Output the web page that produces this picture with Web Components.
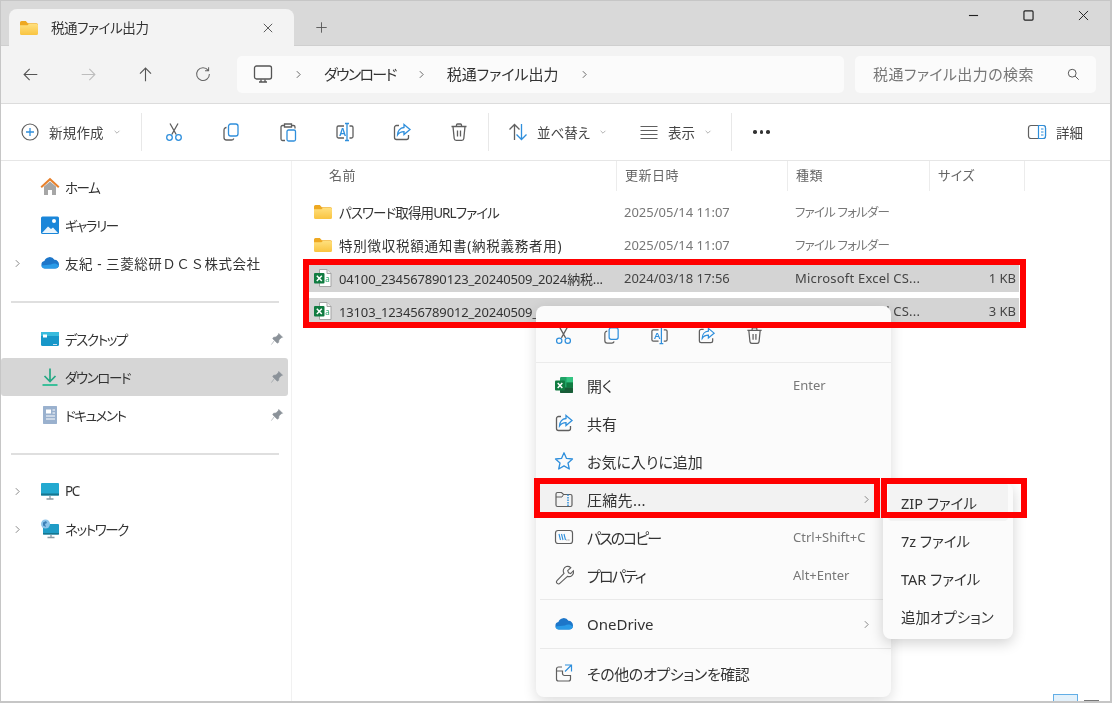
<!DOCTYPE html>
<html lang="ja">
<head>
<meta charset="utf-8">
<title>税通ファイル出力</title>
<style>
  html, body { margin: 0; background: #fff; }
</style>
</head>
<body>
<explorer-window>
  <title-bar></title-bar>
  <address-bar></address-bar>
  <command-bar></command-bar>
  <nav-pane slot="nav">
    <nav-row icon="home">ホーム</nav-row>
    <nav-row icon="gallery">ギャラリー</nav-row>
    <nav-row icon="cloud" arrow style="--nav-ls:.55px;--nav-ff:normal">友紀 - 三菱総研ＤＣＳ株式会社</nav-row>
    <nav-line></nav-line>
    <nav-row icon="desktop" pin>デスクトップ</nav-row>
    <nav-row icon="download" pin selected>ダウンロード</nav-row>
    <nav-row icon="document" pin>ドキュメント</nav-row>
    <nav-line></nav-line>
    <nav-row icon="pc" arrow>PC</nav-row>
    <nav-row icon="network" arrow>ネットワーク</nav-row>
  </nav-pane>
  <file-view slot="files">
    <file-row icon="folder" date="2025/05/14 11:07" type="ファイル フォルダー" style="--name-ls:-.9px">パスワード取得用URLファイル</file-row>
    <file-row icon="folder" date="2025/05/14 11:07" type="ファイル フォルダー" style="--name-ls:.75px">特別徴収税額通知書(納税義務者用)</file-row>
    <file-row icon="csv" selected date="2024/03/18 17:56" type="Microsoft Excel CS..." size="1 KB" style="--name-ls:-.15px">04100_234567890123_20240509_2024納税...</file-row>
    <file-row icon="csv" selected date="2024/03/18 17:56" type="Microsoft Excel CS..." size="3 KB" style="--name-ls:-.15px">13103_123456789012_20240509_2024納税...</file-row>
  </file-view>
  <context-menu slot="over">
    <menu-item icon="excel" key="Enter">開く</menu-item>
    <menu-item icon="share">共有</menu-item>
    <menu-item icon="star">お気に入りに追加</menu-item>
    <menu-item icon="zipfolder" more active style="--item-ls:.3px">圧縮先...</menu-item>
    <menu-item icon="path" key="Ctrl+Shift+C" style="--item-ls:-2px">パスのコピー</menu-item>
    <menu-item icon="wrench" key="Alt+Enter" style="--item-ls:-1.800px">プロパティ</menu-item>
    <menu-line></menu-line>
    <menu-item icon="cloud" more>OneDrive</menu-item>
    <menu-line></menu-line>
    <menu-item icon="moreopts" style="--item-ls:-.4px">その他のオプションを確認</menu-item>
  </context-menu>
  <sub-menu slot="over">
    <sub-item active>ZIP ファイル</sub-item>
    <sub-item>7z ファイル</sub-item>
    <sub-item>TAR ファイル</sub-item>
    <sub-item>追加オプション</sub-item>
  </sub-menu>
  <red-box slot="over" x="303" y="259" w="723" h="69"></red-box>
  <red-box slot="over" x="534" y="478" w="346" h="40"></red-box>
  <red-box slot="over" x="881" y="478" w="146" h="40"></red-box>
  <view-toggle slot="over"></view-toggle>
</explorer-window>

<script>
const GR = '#5f5f5f', BL = '#2f8fdc';
const ICONS = {
  folder: `<defs><linearGradient id="f" x1="0" y1="0" x2="0" y2="1"><stop offset="0" stop-color="#ffe07e"/><stop offset="1" stop-color="#f9c440"/></linearGradient></defs>
    <path d="M1 4.500A1.500 1.500 0 0 1 2.500 3h4.300l2 2.200H17.500A1.500 1.500 0 0 1 19 6.700V9H1z" fill="#eea821"/>
    <path d="M1 7.200h7.500l1.500-1.400h7.600A1.500 1.500 0 0 1 19 7.300v8.200a1.500 1.500 0 0 1-1.500 1.500h-15A1.500 1.500 0 0 1 1 15.500z" fill="url(#f)"/>`,
  csv: `<path d="M6.500 1.500h7.500l4 4v13H6.500z" fill="#fff" stroke="#a4a4a4"/><path d="M14 1.500v4h4" fill="#eee" stroke="#a4a4a4"/>
    <rect x="1" y="5" width="10.500" height="10.500" rx="1" fill="#107c41"/><path d="M3.800 7.700l5 5.200m0-5.200l-5 5.200" stroke="#fff" stroke-width="1.500"/>
    <text x="12.200" y="13.800" font-size="8" font-family="Noto Sans" fill="#21a366">a</text>`,
  excel: `<rect x="6" y="2" width="13" height="16" rx="1.200" fill="#21a366"/><rect x="12.500" y="2" width="6.500" height="5.500" fill="#33c481"/><rect x="12.500" y="7.500" width="6.500" height="5" fill="#107c41"/><rect x="6" y="12.500" width="13" height="5.500" rx="1" fill="#185c37"/>
    <rect x="1" y="5.500" width="10" height="10" rx="1" fill="#107c41"/><path d="M3.700 8l4.600 5m0-5l-4.600 5" stroke="#fff" stroke-width="1.500"/>`,
  cut: `<g fill="none" stroke-width="1.300"><path d="M6 1.500l6.200 11M14 1.500l-6.200 11" stroke="${GR}"/><circle cx="5.500" cy="15.500" r="2.800" stroke="${BL}"/><circle cx="14.500" cy="15.500" r="2.800" stroke="${BL}"/></g>`,
  copy: `<g fill="none" stroke-width="1.300"><rect x="7.500" y="2" width="9.500" height="12" rx="2.200" stroke="${BL}"/><path d="M5.500 5.500A2.500 2.500 0 0 0 3 8v7.500A2.500 2.500 0 0 0 5.500 18h5a2.500 2.500 0 0 0 2.300-1.600" stroke="${GR}"/></g>`,
  paste: `<g fill="none" stroke-width="1.300"><path d="M6 3.500H4.500A1.500 1.500 0 0 0 3 5v12a1.500 1.500 0 0 0 1.500 1.500H7M14 3.500h1.500A1.500 1.500 0 0 1 17 5v1.500M6.500 2h7v3h-7z" stroke="${GR}"/><rect x="9" y="8" width="8.500" height="11" rx="1.500" stroke="${BL}"/></g>`,
  rename: `<g fill="none" stroke-width="1.300"><path d="M9 4H3.500A1.500 1.500 0 0 0 2 5.500v9A1.500 1.500 0 0 0 3.500 16H9M14.500 4h2A1.500 1.500 0 0 1 18 5.500v9a1.500 1.500 0 0 1-1.500 1.500h-2" stroke="${GR}"/><path d="M12 1.500v17M10 1.500h4M10 18.500h4" stroke="${BL}"/></g><text x="4.200" y="13.600" font-size="10" font-weight="600" font-family="Noto Sans" fill="${BL}">A</text>`,
  share: `<g fill="none" stroke-width="1.300"><path d="M7 3.500H4.500A2 2 0 0 0 2.500 5.500v10a2 2 0 0 0 2 2h10a2 2 0 0 0 2-2V13" stroke="${GR}"/><path d="M12 2.500l6 5-6 5V9.700c-3 0-5 1-6.500 3.300 0-4 2.500-7.300 6.500-7.500z" stroke="${BL}"/></g>`,
  trash: `<g fill="none" stroke="${GR}" stroke-width="1.300"><path d="M2.500 4.500h15M7.500 4.500V3a1 1 0 0 1 1-1h3a1 1 0 0 1 1 1v1.500M4 4.500l1.200 12a2 2 0 0 0 2 1.800h5.600a2 2 0 0 0 2-1.800l1.200-12M8.500 8.500v6M11.500 8.500v6"/></g>`,
  sort: `<g fill="none" stroke-width="1.300"><path d="M6.500 18V2.500M1.500 7.500l5-5 5 5" stroke="${GR}"/><path d="M13.500 2v15.500M8.500 12.500l5 5 5-5" stroke="${BL}"/></g>`,
  view: `<path d="M1.500 4.500h17M1.500 8.500h17M1.500 12.500h17M1.500 16.500h17" stroke="${GR}" stroke-width="1"/>`,
  plus: `<circle cx="10" cy="10" r="8" fill="none" stroke="${GR}" stroke-width="1.200"/><path d="M10 6v8M6 10h8" stroke="${BL}" stroke-width="1.300"/>`,
  details: `<rect x="1.500" y="3.500" width="17" height="13" rx="2.500" fill="none" stroke="${GR}" stroke-width="1.200"/><path d="M11.500 3.500h4.500a2.500 2.500 0 0 1 2.500 2.500v8a2.500 2.500 0 0 1-2.500 2.500h-4.500z" fill="#fff" stroke="${BL}" stroke-width="1.200"/><path d="M14 7h2.500M14 10h2.500M14 13h2.500" stroke="${BL}"/>`,
  monitor: `<g fill="none" stroke="#555" stroke-width="1.300"><rect x="1.500" y="2" width="17" height="13" rx="2"/><path d="M6 18h8M8 15.500V18M12 15.500V18"/></g>`,
  home: `<path d="M4 9.500L10 4.500l6 5v8.500h-4v-5H8v5H4z" fill="#a6a6a6"/><path d="M1.200 10.300L10 2.200l8.800 8.100" fill="none" stroke="#e8812c" stroke-width="2"/>`,
  gallery: `<rect x="1" y="1.500" width="18" height="17.500" rx="1.500" fill="#1a86d9"/><path d="M2 18l6-6.500 3 2.500 2-1.500 5 5.500z" fill="#e9f4fc"/><circle cx="14" cy="6" r="2" fill="#fff"/>`,
  cloud: `<path d="M5 15.500a3.800 3.800 0 0 1-.6-7.500 5.500 5.500 0 0 1 10-1.200A4.500 4.500 0 0 1 19 11.500a4 4 0 0 1-4 4z" fill="#1d76c9"/><path d="M1.300 12.500c.4 1.800 1.800 3 3.700 3h10c2 0 3.500-1.300 3.900-3-3-2.800-5.500-2.500-8-1z" fill="#2a9be8"/>`,
  desktop: `<rect x="1" y="3" width="18" height="14" rx="1.500" fill="#1797c9"/><rect x="1" y="3" width="18" height="4" fill="#38bbdd"/><rect x="3" y="5.500" width="4" height="3" fill="#fff"/><path d="M13 15.500h4" stroke="#cde" stroke-width="1"/>`,
  download: `<path d="M10 1.500v12.500M4.500 9l5.500 5.500L15.500 9" fill="none" stroke="#25a884" stroke-width="1.700"/><path d="M2.500 18h15" stroke="#2bbd93" stroke-width="1.800"/>`,
  document: `<rect x="3" y="1" width="14" height="18" rx="1" fill="#86a0c4"/><rect x="3" y="1" width="14" height="18" rx="1" fill="#a9bcd6" opacity=".6"/><path d="M6 4.500h5v4H6z" fill="#fff"/><path d="M12.500 5h2.500M12.500 8h2.500M6 11h9M6 14h9" stroke="#fff"/>`,
  pc: `<rect x="1" y="2" width="18" height="12.500" rx="1" fill="#23a9d0"/><rect x="1" y="12.500" width="18" height="2" fill="#17768f"/><path d="M10 14.500v3M6.500 18h7" stroke="#8a9aa3" stroke-width="1.300"/>`,
  network: `<rect x="3" y="5" width="16" height="10.500" rx="1" fill="#1f9cc6"/><rect x="3" y="14" width="16" height="1.500" fill="#17768f"/><path d="M11 15.500v2.500M7.500 18.500h7" stroke="#8a9aa3" stroke-width="1.300"/><circle cx="5.500" cy="5" r="4.500" fill="#8cc4ea"/><path d="M3 3.500l3-1.500 1 2-2 1 1 3-3-1.500z" fill="#3d7fb5"/>`,
  pin: `<path d="M12.500 2l5.500 5.500-2 .7-3.200 3.200-.4 3.400-2 1.200-6.500-6.500 1.200-2 3.400-.4 3.200-3.200zM6 12.500L2 18" fill="#8b9299" stroke="#8b9299" stroke-width=".8"/>`,
  star: `<path d="M10 1.800l2.500 5.600 6 .6-4.500 4 1.300 6-5.300-3.100L4.700 18l1.300-6-4.500-4 6-.6z" fill="none" stroke="${BL}" stroke-width="1.300" stroke-linejoin="round"/>`,
  zipfolder: `<path d="M2 5a1.500 1.500 0 0 1 1.500-1.500h4l2 2h7A1.500 1.500 0 0 1 18 7v9a1.500 1.500 0 0 1-1.500 1.500h-13A1.500 1.500 0 0 1 2 16z" fill="none" stroke="${GR}" stroke-width="1.200"/><path d="M2 8h6l1.500-2.500" fill="none" stroke="${GR}"/><path d="M14 5.500v12" stroke="${BL}" stroke-width="1.500" stroke-dasharray="1.500 1"/>`,
  path: `<rect x="1.500" y="3.500" width="17" height="13" rx="2.500" fill="none" stroke="${GR}" stroke-width="1.200"/><path d="M5 7l1.500 6M7.500 7l1.500 6M10 7l1.500 6" fill="none" stroke="${BL}" stroke-width="1.100"/><path d="M12.500 13h.8M14.500 13h.8" stroke="${GR}"/>`,
  wrench: `<path d="M12.800 2.200a5 5 0 0 1 4.800 1.200l-3.300 3.200.9 2.300 2.300.8 2.900-3a5 5 0 0 1-6.300 6.100l-8 7.300a1.900 1.900 0 0 1-3.300-2.800l7.500-7.800a5 5 0 0 1 2.500-7.300z" transform="translate(.4 -.5) scale(.93)" fill="none" stroke="${GR}" stroke-width="1.200"/>`,
  moreopts: `<path d="M8 4H4.500A2 2 0 0 0 2.500 6v10A2 2 0 0 0 4.500 18h10a2 2 0 0 0 2-2v-3.500H10.500a2 2 0 0 1-2-2V8H2.500" fill="none" stroke="${GR}" stroke-width="1.200"/><path d="M11 2h6.500v6.500M17.500 2l-6.500 6.500" fill="none" stroke="${BL}" stroke-width="1.200"/>`
};

class XIcon extends HTMLElement {
  connectedCallback() {
    const size = this.getAttribute('size') || 20;
    this.attachShadow({ mode: 'open' }).innerHTML = `
      <style>:host { display: inline-flex; flex: none; width: ${size}px; height: ${size}px; } svg { display: block; }</style>
      <svg width="${size}" height="${size}" viewBox="0 0 20 20">${ICONS[this.getAttribute('name')] || ''}</svg>`;
  }
}
customElements.define('x-icon', XIcon);

// chevrons and small line glyphs share one element
const GLYPHS = {
  right: 'M7 4l6 6-6 6', down: 'M4 7l6 6 6-6', close: 'M3 3l14 14M17 3L3 17', add: 'M10 2v16M2 10h16',
  min: 'M3 10h14', back: 'M18 10H2.500M9 3.500L2.500 10 9 16.500', fwd: 'M2 10h15.500M11 3.500l6.500 6.500-6.500 6.500',
  up: 'M10 18V2.500M3.500 9L10 2.500 16.500 9', refresh: 'M16.500 5.500A8 8 0 1 0 18 10M17 1.500v4.500h-4.500',
  search: 'M12.500 12.500L18 18M14 8A6 6 0 1 1 2 8a6 6 0 0 1 12 0z', max: 'M4.500 3h11A1.500 1.500 0 0 1 17 4.500v11a1.500 1.500 0 0 1-1.500 1.500h-11A1.500 1.500 0 0 1 3 15.500v-11A1.500 1.500 0 0 1 4.500 3z'
};
class XGlyph extends HTMLElement {
  connectedCallback() {
    const s = this.getAttribute('size') || 12;
    const c = this.getAttribute('color') || '#555';
    const w = this.getAttribute('weight') || 1.6;
    this.attachShadow({ mode: 'open' }).innerHTML = `
      <style>:host { display: inline-flex; flex: none; } svg { display: block; }</style>
      <svg width="${s}" height="${s}" viewBox="0 0 20 20"><path d="${GLYPHS[this.getAttribute('name')]}" fill="none" stroke="${c}" stroke-width="${w}"/></svg>`;
  }
}
customElements.define('x-glyph', XGlyph);

class ExplorerWindow extends HTMLElement {
  constructor() {
    super();
    this.attachShadow({ mode: 'open' }).innerHTML = `
      <style>
        :host {
          display: flex; flex-direction: column; position: relative; overflow: hidden;
          box-sizing: border-box; width: 1112px; height: 703px;
          border: solid #c6c6c6; border-width: 1px 2px 2px 1px;
          background: #fff; color: #333;
          font: 14px "Noto Sans", "Noto Sans CJK JP", sans-serif;
          font-feature-settings: "palt";
          filter: blur(.3px);
        }
        #body { display: flex; flex: 1; min-height: 0; }
      </style>
      <slot></slot>
      <div id="body"><slot name="nav"></slot><slot name="files"></slot></div>
      <slot name="over"></slot>`;
  }
}
customElements.define('explorer-window', ExplorerWindow);

class TitleBar extends HTMLElement {
  constructor() {
    super();
    this.attachShadow({ mode: 'open' }).innerHTML = `
      <style>
        :host { display: flex; height: 45px; background: #d9d9d9; padding-left: 8px; box-sizing: border-box; border-bottom: 1px solid #cfcfcf; }
        #tab { display: flex; align-items: center; width: 285px; margin-top: 8px; margin-bottom: -1px; box-sizing: border-box; padding: 0 20px 0 10px; background: #f3f3f3; border-radius: 8px 8px 0 0; }
        #tab span { margin-left: 12px; flex: 1; font-size: 13.500px; letter-spacing: -.4px; padding-bottom: 2px; }
        #add { margin: 8px 0 0 21px; display: flex; align-items: center; }
        #ctl { margin-left: auto; display: flex; align-items: flex-start; padding: 8px 20px 0 0; gap: 42px; }
      </style>
      <div id="tab"><x-icon name="folder"></x-icon><span>税通ファイル出力</span><x-glyph name="close" size="12"></x-glyph></div>
      <div id="add"><x-glyph name="add" size="13" weight="1.400"></x-glyph></div>
      <div id="ctl"><x-glyph name="min" size="13" color="#222" weight="1.700"></x-glyph><x-glyph name="max" size="13" color="#222" weight="1.800"></x-glyph><x-glyph name="close" size="13" color="#222" weight="1.500"></x-glyph></div>`;
  }
}
customElements.define('title-bar', TitleBar);

class AddressBar extends HTMLElement {
  constructor() {
    super();
    this.attachShadow({ mode: 'open' }).innerHTML = `
      <style>
        :host { display: flex; align-items: center; height: 58px; box-sizing: border-box; background: #f3f3f3; border-bottom: 1.500px solid #dcdcdc; padding: 0 14px 1px 1px; }
        .nav { width: 57.500px; display: flex; justify-content: center; flex: none; }
        #crumbs { display: flex; align-items: center; gap: 20px; width: 607px; height: 37px; margin-left: 5px; box-sizing: border-box; padding-left: 16px; background: #fbfbfb; border-radius: 5px; font-size: 15px; }
        #crumbs span { padding-bottom: 2px; }
        #search { display: flex; align-items: center; justify-content: space-between; width: 241px; height: 37px; margin-left: 11px; box-sizing: border-box; padding: 0 16px 0 18px; background: #fbfbfb; border-radius: 5px; color: #777; font-size: 15px; letter-spacing: .4px; }
        #search span { padding-bottom: 2px; }
      </style>
      <div class="nav"><x-glyph name="back" size="17" weight="1.300"></x-glyph></div>
      <div class="nav"><x-glyph name="fwd" size="17" color="#bdbdbd" weight="1.300"></x-glyph></div>
      <div class="nav"><x-glyph name="up" size="17" weight="1.300"></x-glyph></div>
      <div class="nav"><x-glyph name="refresh" size="16" color="#666" weight="1.300"></x-glyph></div>
      <div id="crumbs">
        <x-icon name="monitor"></x-icon><x-glyph name="right" size="11"></x-glyph>
        <span style="letter-spacing:-1.700px">ダウンロード</span><x-glyph name="right" size="11"></x-glyph>
        <span>税通ファイル出力</span><x-glyph name="right" size="11"></x-glyph>
      </div>
      <div id="search"><span>税通ファイル出力の検索</span><x-glyph name="search" size="13" weight="1.500"></x-glyph></div>`;
  }
}
customElements.define('address-bar', AddressBar);

class CommandBar extends HTMLElement {
  constructor() {
    super();
    const btn = n => `<div class="ib"><x-icon name="${n}"></x-icon></div>`;
    this.attachShadow({ mode: 'open' }).innerHTML = `
      <style>
        :host { display: flex; align-items: center; height: 57px; flex: none; box-sizing: border-box; background: #fff; border-bottom: 1.500px solid #e6e6e6; padding-left: 19px; font-size: 13.500px; color: #444; }
        .sep { width: 1px; height: 38px; background: #e8e8e8; flex: none; }
        .ib { width: 57px; display: flex; justify-content: center; flex: none; }
        .tx { display: flex; align-items: center; gap: 9px; flex: none; }
        #new { width: 121px; }
        #more { margin-left: 21px; display: flex; gap: 3px; }
        #more i { width: 3.500px; height: 3.500px; border-radius: 50%; background: #333; }
        #det { margin-left: auto; padding-right: 27px; }
      </style>
      <div class="tx" id="new"><x-icon name="plus"></x-icon><span style="letter-spacing:.2px">新規作成</span><x-glyph style="margin-left:0" name="down" size="8" color="#888"></x-glyph></div>
      <div class="sep"></div>
      <div style="display:flex;margin:0 1px 0 3px">${['cut','copy','paste','rename','share','trash'].map(btn).join('')}</div>
      <div class="sep"></div>
      <div class="tx" style="margin-left:19px"><x-icon name="sort"></x-icon><span>並べ替え</span><x-glyph name="down" size="8" color="#888"></x-glyph></div>
      <div class="tx" style="margin-left:32px"><x-icon name="view"></x-icon><span>表示</span><x-glyph name="down" size="8" color="#888"></x-glyph></div>
      <div class="sep" style="margin-left:19px"></div>
      <div id="more"><i></i><i></i><i></i></div>
      <div class="tx" id="det"><x-icon name="details"></x-icon><span>詳細</span></div>`;
  }
}
customElements.define('command-bar', CommandBar);

class NavPane extends HTMLElement {
  constructor() {
    super();
    this.attachShadow({ mode: 'open' }).innerHTML = `
      <style>:host { display: block; width: 291px; flex: none; box-sizing: border-box; padding-top: 7px; border-right: 1px solid #f1f1f1; }</style>
      <slot></slot>`;
  }
}
customElements.define('nav-pane', NavPane);

class NavLine extends HTMLElement {
  constructor() {
    super();
    this.attachShadow({ mode: 'open' }).innerHTML = `
      <style>:host { display: block; height: 1.500px; margin: 19px 12px 17.500px 10px; background: #dfdfdf; }</style>`;
  }
}
customElements.define('nav-line', NavLine);

class NavRow extends HTMLElement {
  connectedCallback() {
    const sel = this.hasAttribute('selected');
    this.attachShadow({ mode: 'open' }).innerHTML = `
      <style>
        :host { display: grid; grid-template-columns: 33px 31px 1fr 20px; align-items: center; height: 38px; margin-right: 3px; border-radius: 3px; font-size: 13.500px; background: ${sel ? '#d6d6d6' : 'transparent'}; }
        .c { display: flex; justify-content: center; }
        #t { letter-spacing: var(--nav-ls, -1.400px); font-feature-settings: var(--nav-ff, "palt"); white-space: nowrap; }
        .pin { display: flex; justify-content: center; padding-right: 3px; }
      </style>
      <div class="c">${this.hasAttribute('arrow') ? '<x-glyph name="right" size="11" color="#777"></x-glyph>' : ''}</div>
      <div class="c"><x-icon name="${this.getAttribute('icon')}"></x-icon></div>
      <div id="t"><slot></slot></div>
      <div class="pin">${this.hasAttribute('pin') ? '<x-icon name="pin" size="14"></x-icon>' : ''}</div>`;
  }
}
customElements.define('nav-row', NavRow);

class FileView extends HTMLElement {
  constructor() {
    super();
    this.attachShadow({ mode: 'open' }).innerHTML = `
      <style>
        :host { display: block; flex: 1; color: #666; }
        #head { display: grid; grid-template-columns: 325px 171px 142px 95px; height: 30px; font-size: 13px; }
        #head div { padding-left: 8px; border-right: 1.500px solid #ececec; line-height: 29px; letter-spacing: .5px; box-sizing: border-box; }
        #head div:first-child { padding-left: 37px; }
        #rows { display: flex; flex-direction: column; gap: 6.300px; padding: 7px 0 0 16px; }
      </style>
      <div id="head"><div>名前</div><div>更新日時</div><div>種類</div><div>サイズ</div></div>
      <div id="rows"><slot></slot></div>`;
  }
}
customElements.define('file-view', FileView);

class FileRow extends HTMLElement {
  connectedCallback() {
    const sel = this.hasAttribute('selected');
    const a = n => this.getAttribute(n) || '';
    this.attachShadow({ mode: 'open' }).innerHTML = `
      <style>
        :host { display: grid; grid-template-columns: 316px 171px 142px 82px; align-items: center; width: 711px; height: 27px; font-size: 13px; color: ${sel ? '#444' : '#777'}; background: ${sel ? '#d4d4d4' : 'transparent'}; }
        #name { display: flex; align-items: center; gap: 6px; padding-left: 5px; color: #333; white-space: nowrap; overflow: hidden; letter-spacing: var(--name-ls, 0); font-size: ${sel ? 13 : 13.500}px; }
        #type { font-size: ${sel ? 13 : 12.500}px; letter-spacing: ${sel ? '.2px' : '-.8px'}; white-space: nowrap; }
        #size { text-align: right; padding-right: 3px; }
      </style>
      <div id="name"><x-icon name="${a('icon')}"></x-icon><slot></slot></div>
      <div>${a('date')}</div><div id="type">${a('type')}</div><div id="size">${a('size')}</div>`;
  }
}
customElements.define('file-row', FileRow);

class ContextMenu extends HTMLElement {
  constructor() {
    super();
    const btn = n => `<div><x-icon name="${n}" size="19"></x-icon></div>`;
    this.attachShadow({ mode: 'open' }).innerHTML = `
      <style>
        :host { position: absolute; left: 535px; top: 305px; width: 355px; height: 391px; box-sizing: border-box; background: #fbfbfb; border-radius: 8px; box-shadow: 0 4px 14px rgba(0,0,0,.14); }
        #top { display: flex; height: 57px; box-sizing: border-box; padding: 20px 0 0 4px; border-bottom: 1px solid #ebebeb; }
        #top div { width: 47.700px; display: flex; justify-content: center; }
        #list { padding: 3px 5px 0 4px; }
      </style>
      <div id="top">${['cut','copy','rename','share','trash'].map(btn).join('')}</div>
      <div id="list"><slot></slot></div>`;
  }
}
customElements.define('context-menu', ContextMenu);

class MenuLine extends HTMLElement {
  constructor() {
    super();
    this.attachShadow({ mode: 'open' }).innerHTML = `
      <style>:host { display: block; height: 1px; margin: 5px -5px 5px 0; background: #e9e9e9; }</style>`;
  }
}
customElements.define('menu-line', MenuLine);

class MenuItem extends HTMLElement {
  connectedCallback() {
    const key = this.getAttribute('key') || '';
    this.attachShadow({ mode: 'open' }).innerHTML = `
      <style>
        :host { display: grid; grid-template-columns: 20px 219px 1fr 14px; align-items: center; height: 38px; padding: 0 11px 0 14px; box-sizing: border-box; border-radius: 4px; font-size: 15px; color: #333; background: ${this.hasAttribute('active') ? '#f2f2f2' : 'transparent'}; }
        #label { padding-left: 13px; white-space: nowrap; letter-spacing: var(--item-ls, 0); }
        #key { font-size: 13px; color: #777; white-space: nowrap; }
      </style>
      <x-icon name="${this.getAttribute('icon')}"></x-icon>
      <div id="label"><slot></slot></div>
      <div id="key">${key}</div>
      <div>${this.hasAttribute('more') ? '<x-glyph name="right" size="11" color="#777"></x-glyph>' : ''}</div>`;
  }
}
customElements.define('menu-item', MenuItem);

class SubMenu extends HTMLElement {
  constructor() {
    super();
    this.attachShadow({ mode: 'open' }).innerHTML = `
      <style>
        :host { position: absolute; left: 882px; top: 482px; width: 130px; height: 156px; box-sizing: border-box; padding: 0 5px; background: #fbfbfb; border-radius: 8px; box-shadow: 0 4px 14px rgba(0,0,0,.18); }
      </style>
      <slot></slot>`;
  }
}
customElements.define('sub-menu', SubMenu);

class SubItem extends HTMLElement {
  connectedCallback() {
    this.attachShadow({ mode: 'open' }).innerHTML = `
      <style>
        :host { display: flex; align-items: center; height: 38px; padding-left: 13px; border-radius: 4px; font-size: 14.500px; white-space: nowrap; color: #333; background: ${this.hasAttribute('active') ? '#f3f3f3' : 'transparent'}; }
      </style>
      <slot></slot>`;
  }
}
customElements.define('sub-item', SubItem);

class RedBox extends HTMLElement {
  connectedCallback() {
    const a = n => this.getAttribute(n);
    this.attachShadow({ mode: 'open' }).innerHTML = `
      <style>
        :host { position: absolute; left: ${a('x') - 1}px; top: ${a('y') - 1}px; width: ${a('w')}px; height: ${a('h')}px; box-sizing: border-box; border: 6px solid #f00; }
      </style>`;
  }
}
customElements.define('red-box', RedBox);

class ViewToggle extends HTMLElement {
  constructor() {
    super();
    this.attachShadow({ mode: 'open' }).innerHTML = `
      <style>
        :host { position: absolute; left: 1052px; bottom: 0; display: flex; gap: 6px; align-items: flex-end; }
        #a { width: 25px; height: 7px; box-sizing: border-box; background: #e3f1fb; border: solid #62aee6; border-width: 1.500px 1.500px 0; }
        #b { width: 15px; height: 1.500px; background: #777; }
      </style>
      <div id="a"></div><div id="b"></div>`;
  }
}
customElements.define('view-toggle', ViewToggle);
</script>
</body>
</html>
